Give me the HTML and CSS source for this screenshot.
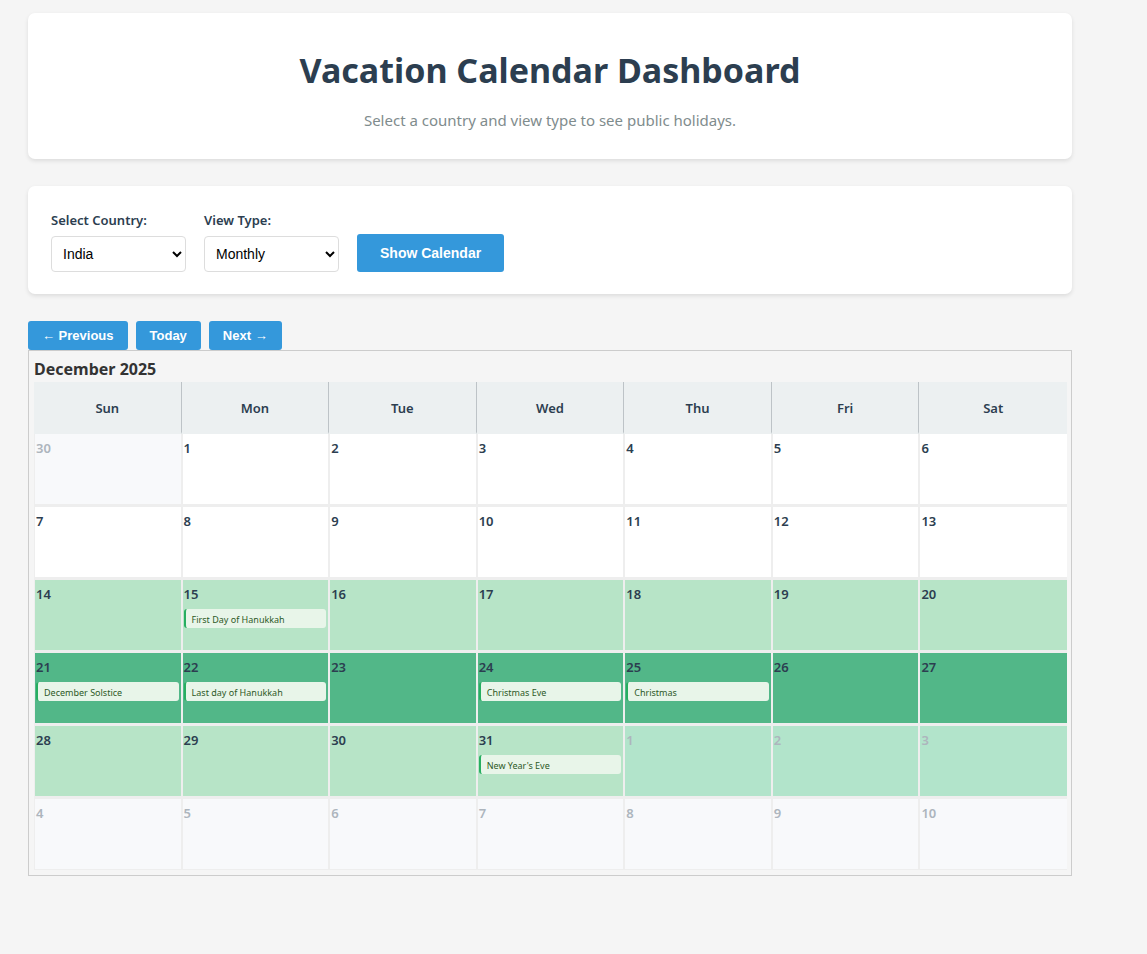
FILE: index.html
```html
<!DOCTYPE html>
<html lang="en">
<head>
<meta charset="utf-8">
<title>Vacation Calendar Dashboard</title>
<link rel="stylesheet" href="styles.css">
</head>
<body>
<main class="page">
  <header class="card hero">
    <h1 class="hero-title">Vacation Calendar Dashboard</h1>
    <p class="hero-text">Select a country and view type to see public holidays.</p>
  </header>

  <form class="card controls">
    <div class="field">
      <label for="country">Select Country:</label>
      <select id="country"><option>India</option></select>
    </div>
    <div class="field">
      <label for="view">View Type:</label>
      <select id="view"><option>Monthly</option></select>
    </div>
    <button class="btn btn-main" type="button">Show Calendar</button>
  </form>

  <nav class="month-nav">
    <button class="btn" type="button">← Previous</button>
    <button class="btn" type="button">Today</button>
    <button class="btn" type="button">Next →</button>
  </nav>

  <section class="calendar">
    <h2 class="month">December 2025</h2>
    <table class="grid">
      <thead>
        <tr><th>Sun</th><th>Mon</th><th>Tue</th><th>Wed</th><th>Thu</th><th>Fri</th><th>Sat</th></tr>
      </thead>
      <tbody>
        <tr><td class="other">30</td><td>1</td><td>2</td><td>3</td><td>4</td><td>5</td><td>6</td></tr>
        <tr><td>7</td><td>8</td><td>9</td><td>10</td><td>11</td><td>12</td><td>13</td></tr>
        <tr class="light"><td>14</td><td>15<div class="event">First Day of Hanukkah</div></td><td>16</td><td>17</td><td>18</td><td>19</td><td>20</td></tr>
        <tr class="strong"><td>21<div class="event">December Solstice</div></td><td>22<div class="event">Last day of Hanukkah</div></td><td>23</td><td>24<div class="event">Christmas Eve</div></td><td>25<div class="event">Christmas</div></td><td>26</td><td>27</td></tr>
        <tr class="light"><td>28</td><td>29</td><td>30</td><td>31<div class="event">New Year's Eve</div></td><td class="other">1</td><td class="other">2</td><td class="other">3</td></tr>
        <tr><td class="other">4</td><td class="other">5</td><td class="other">6</td><td class="other">7</td><td class="other">8</td><td class="other">9</td><td class="other">10</td></tr>
      </tbody>
    </table>
  </section>
</main>
</body>
</html>
```

FILE: styles.css
```css
* { box-sizing: border-box; }
body {
  margin: 0;
  background: #f5f5f5;
  color: #333;
  font-family: "Segoe UI", "Noto Sans", sans-serif;
}
.page { padding: 13px 75px 28px 28px; }

.card {
  margin-bottom: 27px;
  background: #fff;
  border-radius: 7px;
  box-shadow: 0 2px 4px rgba(0, 0, 0, 0.1);
}
.hero { padding: 31px 22px 27px; text-align: center; }
.hero-title {
  margin: 0 0 12px;
  color: #2c3e50;
  font-size: 34px;
  line-height: 52px;
}
.hero-text {
  margin: 0;
  color: #7f8c8d;
  font-size: 15px;
  line-height: 24px;
}

.controls {
  display: flex;
  align-items: flex-end;
  gap: 18px;
  padding: 24px 23px 22px;
}
.field { display: flex; flex-direction: column; gap: 6px; }
.field label {
  color: #2c3e50;
  font-size: 13px;
  font-weight: 600;
  line-height: 20px;
}
.field select {
  width: 135px;
  height: 36px;
  padding: 0 7px;
  border: 1px solid #ddd;
  border-radius: 4px;
  background: #fff;
  color: #000;
  font: 14px "Liberation Sans", Arial, sans-serif;
}
.btn {
  height: 29px;
  padding: 0 14px;
  border: 0;
  border-radius: 3px;
  background: #3498db;
  color: #fff;
  font: bold 13px "Liberation Sans", Arial, sans-serif;
}
.btn-main { height: 38px; padding: 0 23px; font-size: 14px; }

.month-nav { display: flex; gap: 8px; }

.calendar { padding: 5px 4px 5px 5px; border: 1px solid #ccc; }
.month { margin: 0; font-size: 16px; line-height: 26px; }
.grid {
  width: 100%;
  table-layout: fixed;
  border-collapse: separate;
  border-spacing: 0;
  color: #2c3e50;
}
.grid th {
  height: 52px;
  padding: 2px 0 0;
  border-right: 1px solid #bdc3c7;
  border-bottom: 2px solid #ecf0f1;
  background: #ecf0f1;
  font-size: 13px;
  font-weight: 600;
}
.grid td {
  height: 73px;
  padding: 4px 2px 0 1px;
  border: 1px solid #eee;
  border-width: 0 1px 3px;
  background: #fff;
  font-size: 13px;
  font-weight: 600;
  line-height: 20px;
  vertical-align: top;
}
.grid th:last-child, .grid td:last-child { border-right: 0; }
.grid tr:last-child td { height: 71px; border-bottom-width: 1px; }
.grid .light td { background: #b7e4c7; }
.grid .strong td { background: #52b788; }
.grid td.other { background: #f8f9fb; color: #adb5bd; }
.grid .light td.other { background: #b2e4cb; }
.event {
  margin-top: 5px;
  padding: 2px 6px 0;
  overflow: hidden;
  border-left: 2px solid #27ae60;
  border-radius: 3px;
  background: #e8f5e9;
  color: #2d5a27;
  font-size: 9px;
  font-weight: 400;
  line-height: 17px;
  white-space: nowrap;
}
```
